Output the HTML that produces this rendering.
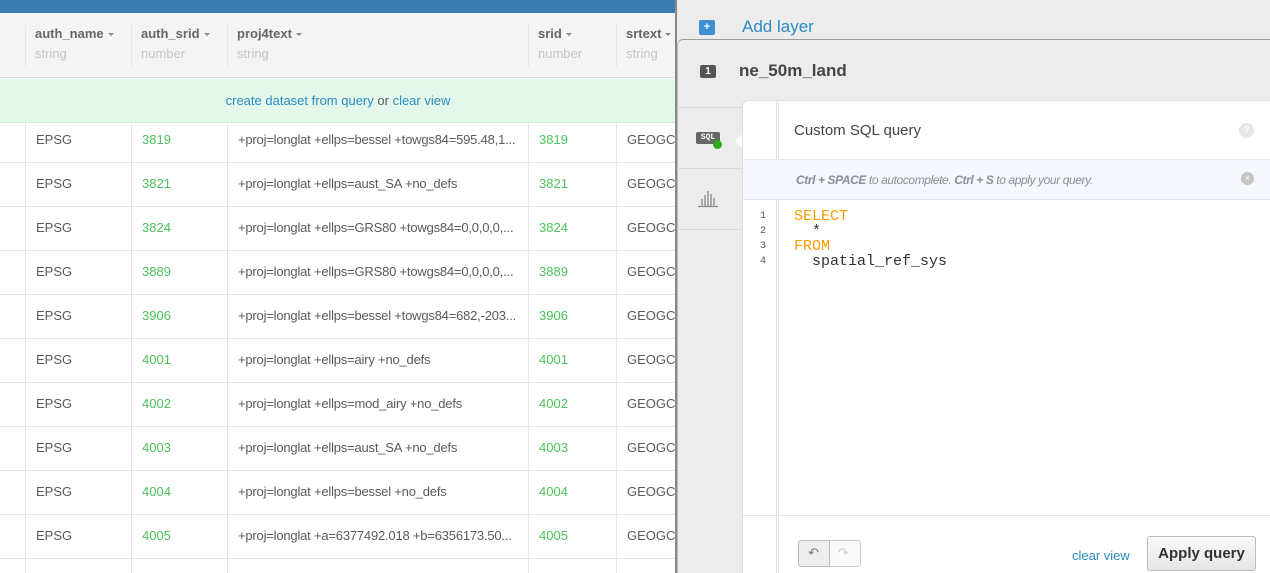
<!DOCTYPE html><html><head><meta charset="utf-8"><style>
*{margin:0;padding:0;box-sizing:border-box}
body{width:1270px;height:573px;overflow:hidden;position:relative;background:#fff;font-family:"Liberation Sans",sans-serif;color:#555;font-size:13px}
.a{position:absolute}
.vl{position:absolute;width:1px;background:#e6e6e6}
.hl{position:absolute;height:1px;background:#e6e6e6;left:0;width:676px}
.h1{position:absolute;top:26px;font-weight:bold;font-size:13px;color:#666}
.h2{position:absolute;top:46px;font-size:13px;color:#c4c4c4}
.car{display:inline-block;width:0;height:0;border-left:3px solid transparent;border-right:3px solid transparent;border-top:3px solid #888;vertical-align:middle;margin-left:4px}
.c{position:absolute;font-size:13px;color:#5a5a5a;line-height:16px}
.g{color:#4cc35a}
.code{font-family:"Liberation Mono",monospace;font-size:15px;line-height:15px}
</style></head><body>
<div class="a" style="left:0;top:0;width:676px;height:13px;background:#3c7db3"></div>
<div class="a" style="left:0;top:13px;width:676px;height:65px;background:#f4f4f4;border-bottom:1px solid #dcdcdc"></div>
<div class="vl" style="left:25px;top:25px;height:42px"></div>
<div class="vl" style="left:131px;top:25px;height:42px"></div>
<div class="vl" style="left:227px;top:25px;height:42px"></div>
<div class="vl" style="left:528px;top:25px;height:42px"></div>
<div class="vl" style="left:616px;top:25px;height:42px"></div>
<div class="h1" style="left:35px">auth_name<span class="car"></span></div><div class="h2" style="left:35px">string</div>
<div class="h1" style="left:141px">auth_srid<span class="car"></span></div><div class="h2" style="left:141px">number</div>
<div class="h1" style="left:237px">proj4text<span class="car"></span></div><div class="h2" style="left:237px">string</div>
<div class="h1" style="left:538px">srid<span class="car"></span></div><div class="h2" style="left:538px">number</div>
<div class="h1" style="left:626px">srtext<span class="car"></span></div><div class="h2" style="left:626px">string</div>
<div id="rows"></div>
<div class="a" style="left:0;top:79px;width:676px;height:44px;background:#e3f8ea;border-bottom:1px solid #d5e6da;text-align:center;line-height:43px;color:#555;font-size:13px"><span style="color:#2b8bc2">create dataset from query</span> or <span style="color:#2b8bc2">clear view</span></div>
<script>
var d=[["3819","+proj=longlat +ellps=bessel +towgs84=595.48,1..."],["3821","+proj=longlat +ellps=aust_SA +no_defs"],["3824","+proj=longlat +ellps=GRS80 +towgs84=0,0,0,0,..."],["3889","+proj=longlat +ellps=GRS80 +towgs84=0,0,0,0,..."],["3906","+proj=longlat +ellps=bessel +towgs84=682,-203..."],["4001","+proj=longlat +ellps=airy +no_defs"],["4002","+proj=longlat +ellps=mod_airy +no_defs"],["4003","+proj=longlat +ellps=aust_SA +no_defs"],["4004","+proj=longlat +ellps=bessel +no_defs"],["4005","+proj=longlat +a=6377492.018 +b=6356173.50..."]];
var h='';for(var i=0;i<d.length;i++){var y=118+44*i,t=(i==0?132:y+14);h+='<div class="hl" style="top:'+(y+44)+'px"></div>';
h+='<div class="c" style="left:36px;top:'+t+'px">EPSG</div><div class="c g" style="left:142px;top:'+t+'px">'+d[i][0]+'</div><div class="c" style="left:238px;top:'+t+'px;letter-spacing:-0.2px">'+d[i][1]+'</div><div class="c g" style="left:539px;top:'+t+'px">'+d[i][0]+'</div><div class="c" style="left:627px;top:'+t+'px">GEOGCS</div>';}
[25,131,227,528,616].forEach(function(x){h+='<div class="vl" style="left:'+x+'px;top:123px;height:450px"></div>'});
document.getElementById('rows').innerHTML=h;
</script>
<div class="a" style="left:675px;top:0;width:595px;height:573px;background:#ececec;border-left:2px solid #888"></div>
<div class="a" style="left:699px;top:20px;width:16px;height:15px;background:#3d8fd1;border-radius:2px;color:#fff;font-size:11px;line-height:15px;text-align:center;font-weight:bold">+</div>
<div class="a" style="left:742px;top:17px;font-size:17px;color:#2b8bc2">Add layer</div>
<div class="a" style="left:677px;top:39px;width:593px;height:534px;border-top:1px solid #9a9a9a;border-left:1px solid #bbb;border-top-left-radius:6px;background:#ececec"></div>
<div class="a" style="left:700px;top:65px;width:16px;height:13px;background:#555;border-radius:2px;color:#fff;font-size:10px;line-height:13px;text-align:center;font-weight:bold">1</div>
<div class="a" style="left:739px;top:61px;font-size:17px;font-weight:bold;color:#444">ne_50m_land</div>
<div class="a" style="left:677px;top:107px;width:65px;height:1px;background:#dadada"></div>
<div class="a" style="left:677px;top:168px;width:65px;height:1px;background:#dadada"></div>
<div class="a" style="left:677px;top:229px;width:65px;height:1px;background:#dadada"></div>
<div class="a" style="left:696px;top:132px;width:24px;height:12px;background:#666;border-radius:2px;color:#fff;font-size:8px;line-height:12px;font-weight:bold;text-align:center;font-family:'Liberation Mono',monospace">SQL</div>
<div class="a" style="left:713px;top:140px;width:9px;height:9px;background:#2eaa1c;border-radius:50%"></div>
<svg class="a" style="left:698px;top:190px" width="20" height="18"><g stroke="#888" stroke-width="1.3"><line x1="0" y1="16.5" x2="20" y2="16.5"/><line x1="4" y1="16" x2="4" y2="9"/><line x1="7" y1="16" x2="7" y2="5"/><line x1="10" y1="16" x2="10" y2="1"/><line x1="13" y1="16" x2="13" y2="4"/><line x1="16" y1="16" x2="16" y2="8"/></g></svg>
<div class="a" style="left:742px;top:100px;width:528px;height:473px;background:#fff;border-top:1px solid #ddd;border-left:1px solid #ddd;border-top-left-radius:6px"></div>
<div class="a" style="left:735px;top:134px;width:0;height:0;border-top:7px solid transparent;border-bottom:7px solid transparent;border-right:7px solid #fff"></div>
<div class="a" style="left:776px;top:101px;width:1px;height:472px;background:#e2e2e2"></div>
<div class="a" style="left:778px;top:101px;width:1px;height:472px;background:#dbe7f3"></div>
<div class="a" style="left:743px;top:159px;width:527px;height:41px;background:#f4f7fc;border-top:1px solid #e3e8ef;border-bottom:1px solid #e3e8ef"></div>
<div class="a" style="left:794px;top:122px;font-size:15px;color:#444">Custom SQL query</div>
<div class="a" style="left:1239px;top:123px;width:15px;height:15px;border-radius:50%;background:#e6e6e6;color:#fff;font-size:10px;line-height:15px;text-align:center;font-weight:bold">?</div>
<div class="a" style="left:796px;top:173px;font-size:12px;color:#8a8f96;font-style:italic;letter-spacing:-0.4px"><b>Ctrl + SPACE</b> to autocomplete. <b>Ctrl + S</b> to apply your query.</div>
<div class="a" style="left:1241px;top:172px;width:13px;height:13px;border-radius:50%;background:#c4c4c4;color:#fff;font-size:9px;line-height:13px;text-align:center">×</div>
<div class="a code" style="left:752px;top:209px;width:14px;text-align:right;font-size:10px;color:#555">1<br>2<br>3<br>4</div>
<div class="a code" style="left:794px;top:209px;color:#333;white-space:pre"><span style="color:#f90">SELECT</span>
  *
<span style="color:#f90">FROM</span>
  spatial_ref_sys</div>
<div class="a" style="left:743px;top:515px;width:527px;height:1px;background:#e2e2e2"></div>
<div class="a" style="left:798px;top:540px;width:63px;height:27px;border:1px solid #ccc;border-radius:3px;background:#fafafa"></div>
<div class="a" style="left:798px;top:540px;width:32px;height:27px;border:1px solid #bbb;border-radius:3px 0 0 3px;background:#eee"></div>
<div class="a" style="left:808px;top:545px;font-size:13px;color:#777">↶</div>
<div class="a" style="left:838px;top:545px;font-size:13px;color:#ccc">↷</div>
<div class="a" style="left:1072px;top:548px;font-size:13px;color:#2b8bc2">clear view</div>
<div class="a" style="left:1147px;top:536px;width:109px;height:35px;border:1px solid #bbb;border-radius:3px;background:linear-gradient(#fafafa,#e6e6e6);text-align:center;line-height:33px;font-size:15px;font-weight:bold;color:#333">Apply query</div>
</body></html>
